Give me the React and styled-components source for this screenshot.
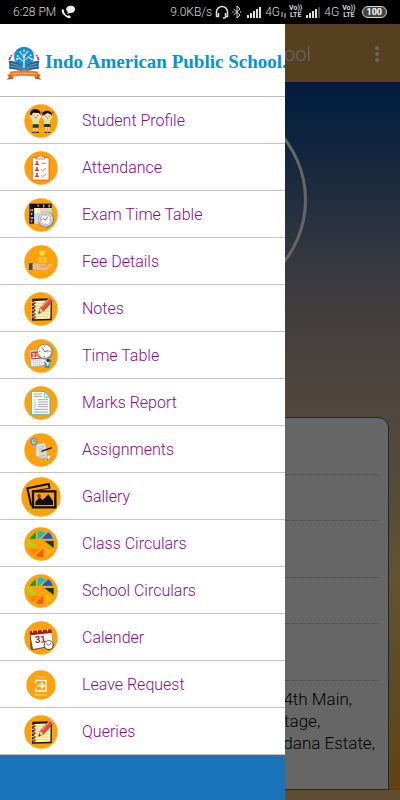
import React from 'react'
import styled, { createGlobalStyle } from 'styled-components'

const GlobalStyle = createGlobalStyle`
    * {
        box-sizing: border-box;
    }

    body {
        margin: 0;
        font-family: Roboto, 'Liberation Sans', sans-serif;
        font-weight: 300;
    }
`

const Screen = styled.div`
    position: relative;
    display: flex;
    flex-direction: column;
    min-height: 100vh;
    overflow: hidden;
    background: #000;
`

const StatusBar = styled.div`
    display: flex;
    align-items: center;
    justify-content: space-between;
    height: 24px;
    padding: 0 13px;
    background: #000;
    color: #d8d8d8;
    font-size: 12px;
    white-space: nowrap;

    svg {
        display: block;
        flex: none;
    }
`

const StatusGroup = styled.div`
    display: flex;
    align-items: center;
    gap: ${({ $gap }) => $gap}px;
`

const VolteBadge = styled.span`
    display: flex;
    flex-direction: column;
    align-items: center;
    font-size: 7px;
    font-weight: 700;
    line-height: 7px;
`

const Battery = styled.span`
    height: 12px;
    padding: 0 4px;
    margin-left: 3px;
    border: 1px solid #d8d8d8;
    border-radius: 6px;
    background: #444;
    color: #fff;
    font-size: 9px;
    font-weight: 700;
    line-height: 10px;
`

const Page = styled.div`
    position: relative;
    flex: 1;
    display: flex;
    flex-direction: column;
`

const AppBar = styled.header`
    display: flex;
    align-items: center;
    justify-content: flex-end;
    gap: 59px;
    height: 58px;
    padding: 2px 16px 0 0;
    background: #d7a04f;
    color: #fff;
`

const Title = styled.h1`
    margin: 0;
    font-size: 20px;
    font-weight: 300;
    white-space: nowrap;
`

const MenuButton = styled.button`
    padding: 0;
    border: none;
    background: none;
    color: inherit;

    svg {
        display: block;
    }
`

const Profile = styled.main`
    flex: 1;
    display: flex;
    flex-direction: column;
    align-items: center;
    padding: 14px 11px 0;
    border-bottom: 10px solid #eebf7d;
    background: linear-gradient(
        #084a98 0%,
        #0a509e 3%,
        #46699b 14%,
        #7d87a0 23%,
        #a59b9b 33%,
        #c3af9b 44%,
        #d7b98c 58%,
        #f5d273 70%,
        #ebb955 86%,
        #faa523 100%
    );
`

const Avatar = styled.div`
    width: 214px;
    height: 208px;
    border: 3px solid #fff;
    border-radius: 50%;
`

const Card = styled.section`
    flex: 1;
    width: 100%;
    margin-top: 113px;
    padding: 0 8px 34px;
    border: 1px solid #1a72b8;
    border-radius: 11px 11px 0 0;
    background: #fff;
`

const CardRow = styled.div`
    height: ${({ $tall }) => ($tall ? 57 : 46)}px;
    background: repeating-linear-gradient(90deg, #ccc 0 6px, #fff 6px 8px) bottom / 100% 1px no-repeat;
`

const Address = styled.address`
    display: flex;
    flex-direction: column;
    padding: 7px 0 0 calc(100% - 106px);
    color: #000;
    font-size: 17px;
    font-style: normal;
    line-height: 22px;
    white-space: nowrap;
`

const Scrim = styled.div`
    position: absolute;
    inset: 0;
    background: rgba(0, 0, 0, 0.6);
`

const Drawer = styled.aside`
    position: absolute;
    top: 0;
    bottom: 0;
    left: 0;
    width: calc(100% - 115px);
    overflow: hidden;
    background: #1a72b8;
`

const Brand = styled.div`
    display: flex;
    align-items: center;
    gap: 3px;
    height: 73px;
    padding: 4px 0 0 6px;
    border-bottom: 1px solid #bbb;
    background: #fff;
    color: #0094dc;
    font-family: 'Liberation Serif', serif;
    font-size: 19px;
    font-weight: 700;
    white-space: nowrap;

    svg {
        flex: none;
    }
`

const MenuList = styled.ul`
    margin: 0;
    padding: 0;
    list-style: none;
`

const MenuLink = styled.a`
    display: flex;
    align-items: center;
    height: 47px;
    padding-top: 1px;
    border-bottom: 1px solid #c4c4c4;
    background: #fff;
    color: #8b0a8b;
    font-size: 16px;
    text-decoration: none;
`

const IconCell = styled.span`
    display: flex;
    justify-content: center;
    width: 82px;
`

const Disc = ({ size = 34, box = 102, children }) => (
    <svg width={size} height={size} viewBox={`0 0 ${box} ${box}`} aria-hidden="true">
        <circle cx={box / 2} cy={box / 2} r={box / 2 - 1} fill="#ffa20a" />
        {children}
    </svg>
)

const StudentsIcon = () => (
    <Disc>
        <path d="M27 64h15v20h-5V70h-4v14h-6zM63 64h14v20h-5V70h-3v14h-5z" fill="#f6c9a0" />
        <path d="M19 42l-3-8 5-3 9 13h12l7-10 4 3-9 15v14H26V52zM57 44l-6-9 4-3 9 11h12l7-9 4 3-9 14v12H62V52z" fill="#f6d3ae" />
        <path d="M26 46h18v17H26zM61 46h17v17H61z" fill="#c9ec9a" />
        <path d="M26 61h18v10H26zM60 60h19l1 9H59z" fill="#1d3b22" />
        <path d="M26 83h8v4h-9zM36 83h8l1 4h-9zM63 83h7v4h-8zM72 83h6l1 4h-7z" fill="#222" />
        <circle cx="35" cy="33" r="15" fill="#fcdcb8" />
        <circle cx="70" cy="35" r="14" fill="#fcdcb8" />
        <path d="M19 33c-2-12 6-18 16-17 11 0 17 8 14 17l-4-6-18-1-4 8zM55 36c-1-13 6-16 15-16 10 0 15 7 14 16-3-6-9-7-14-9-4 4-9 5-15 9z" fill="#0d0d0d" />
        <path d="M57 26l-6-5 1 9zM82 25l6-4v9z" fill="#c22" />
        <path d="M28 35h3M39 35h3M64 37h3M74 37h3M33 41h5M69 43h4" stroke="#5b2b18" strokeWidth="2" />
    </Disc>
)

const AttendanceIcon = () => (
    <Disc>
        <rect x="25" y="20" width="50" height="67" rx="3" fill="#fff" stroke="#e33b25" strokeWidth="2" />
        <path d="M37 24v-7h7c1-5 10-5 11 0h7v7z" fill="#fff" stroke="#e33b25" strokeWidth="2" />
        {[36, 54, 72].map((y) => (
            <g key={y} fill="#e0301e">
                <circle cx="39" cy={y - 3} r="3" />
                <path d={`M33 ${y + 6}q0-6 6-6t6 6z`} />
            </g>
        ))}
        <path d="M52 37h14M52 55l4 4 10-8M52 73l4 4 10-8" fill="none" stroke="#e0301e" strokeWidth="2" />
    </Disc>
)

const ExamIcon = () => (
    <Disc>
        <rect x="16" y="17" width="67" height="60" fill="#111" />
        <rect x="31" y="30" width="52" height="47" fill="#f4eedb" />
        <path d="M31 30h17v15H31z" fill="#fff4bf" />
        <path d="M48 30h17v15H48z" fill="#f8c8c2" />
        <path d="M65 30h18v15H65z" fill="#c9e6b5" />
        <path d="M31 45h17v16H31z" fill="#c8dcf1" />
        <path d="M31 61h17v16H31z" fill="#ead2ec" />
        <path d="M40 21h3v6M57 21h4l-4 6h4M73 21h4v6h-4M77 24h-3M20 40v-6l3 3 3-3v6M20 46h6M23 46v6M20 57l2 5 2-4 2 4 1-5M20 68h6M23 68v6" fill="none" stroke="#fff" strokeWidth="2" />
        <circle cx="66" cy="65" r="24" fill="#777" />
        <circle cx="65" cy="64" r="22" fill="#d6d9dc" />
        <circle cx="65" cy="65" r="16" fill="#f8fafc" stroke="#999" strokeWidth="2" />
        <path d="M65 66l-9-5M65 66l6-10" stroke="#e0512b" strokeWidth="3" />
        <path d="M65 51v3M65 76v3M51 65h3M76 65h3" stroke="#555" strokeWidth="2" />
    </Disc>
)

const FeeIcon = () => (
    <Disc>
        <path d="M15 54h11v21H15z" fill="#2d5068" />
        <path d="M26 56c8-3 15-2 22 2h13c5 0 5 6 0 6H49l17 1 14-9c4-2 7 1 4 4L68 74c-4 3-9 3-14 2l-28-3z" fill="#e8b98a" />
        <path d="M49 65h15" stroke="#c9935f" strokeWidth="2" />
        <circle cx="54" cy="24" r="9" fill="#ffd43c" stroke="#efb419" strokeWidth="2" />
        <path d="M54 19v10M51 21h5M51 27h5" stroke="#fff0a0" strokeWidth="2" />
        {[36, 42, 48].map((y) => (
            <g key={y} fill="#ffd43c" stroke="#eba912">
                <rect x="42" y={y} width="13" height="5" rx="2" />
                <rect x="56" y={y} width="13" height="5" rx="2" />
            </g>
        ))}
    </Disc>
)

const NotesIcon = () => (
    <Disc>
        <path d="M25 20l59-1-1 66-59 1z" fill="#1c1608" />
        <path d="M30 27l50-2-1 55-50 2z" fill="#fdf3b4" />
        <path d="M37 34h38M37 42h38M37 50h38M37 58h37M37 66h37M37 74h36" stroke="#cfc79a" strokeWidth="2" />
        {[33, 44, 55, 66, 76].map((y) => (
            <g key={y}>
                <circle cx="31" cy={y} r="4" fill="#8e1d15" />
                <path d={`M21 ${y - 1}h10`} stroke="#e8dfb2" strokeWidth="3" />
            </g>
        ))}
        <path d="M44 64l5-16 26-30 11 8-27 31z" fill="#ee4d31" stroke="#8e2a15" strokeWidth="2" />
        <path d="M44 64l5-16 10 9z" fill="#f8c58d" />
        <path d="M44 64l2-6 4 3z" fill="#222" />
        <path d="M53 46l23-27" stroke="#ff9273" strokeWidth="4" />
        <path d="M75 18l4-3 10 7-3 4z" fill="#e99" />
    </Disc>
)

const TimeTableIcon = () => (
    <Disc>
        <path d="M16 34l49-4 5 48-49 6z" fill="#e9f1f8" stroke="#8c9db0" strokeWidth="2" />
        <path d="M20 38l29-2 3 23-30 2z" fill="#d8432e" />
        <text x="23" y="56" fill="#fff" fontSize="21" fontWeight="700" fontFamily="Liberation Sans, sans-serif">12</text>
        <path d="M25 66l30-3M26 71l30-3M27 77l30-4" stroke="#9fb8d0" strokeWidth="2" strokeDasharray="4 2" />
        <circle cx="63" cy="38" r="24" fill="#858d94" />
        <circle cx="62" cy="37" r="20" fill="#f7f7f3" />
        <path d="M62 38l-8-12M62 38l12-3M62 20v4M62 51v4M45 37h4M76 37h4" stroke="#333" strokeWidth="2" />
        <path d="M59 66l8 5 11-10 6 3-7 11v12H62V75z" fill="#2f95ce" />
        <path d="M65 70l6 12 6-12z" fill="#f8fcff" />
        <circle cx="72" cy="64" r="5" fill="#51301c" />
    </Disc>
)

const MarksIcon = () => (
    <Disc>
        <path d="M22 16h39l17 18v52H22z" fill="#fff" stroke="#36c3a7" strokeWidth="3" />
        <path d="M61 16v18h17z" fill="#bff2e5" stroke="#36c3a7" strokeWidth="2" />
        <path d="M29 24h25M29 31h25M42 41h30M42 48h30M42 55h30M42 62h30M29 70h43M29 78h43" stroke="#777" strokeWidth="2" />
        <path d="M29 42l2 2 6-5M29 50l2 2 6-5M29 57l2 2 6-5M29 64l2 2 6-5" fill="none" stroke="#36c3a7" strokeWidth="2" />
    </Disc>
)

const AssignmentsIcon = () => (
    <Disc>
        <path d="M36 34l28-4 5 24 1 20-22 3-14-8z" fill="#d6d3c6" stroke="#aaa79a" strokeWidth="2" />
        <path d="M39 34l23-3 5 30-28 9z" fill="#e3e1da" />
        <path d="M42 42l18-4M43 48l18-4M44 54l17-4M45 61l17-4M44 70l17-3" stroke="#aab0b4" strokeWidth="2" />
        <circle cx="30" cy="26" r="11" fill="#7e8e9b" />
        <circle cx="30" cy="26" r="7" fill="#c6d2da" />
        <path d="M30 21v5h5" fill="none" stroke="#444" strokeWidth="2" />
        <path d="M52 55l32-11" stroke="#111" strokeWidth="4" />
        <path d="M64 80l10-13 5 4-9 14z" fill="#dff1ee" />
        <path d="M66 79l3-4 5 4-4 5z" fill="#2aa79a" />
    </Disc>
)

const GalleryIcon = () => (
    <Disc size={40} box={120}>
        <path d="M30 84L19 34l64-13 3 14" fill="none" stroke="#111" strokeWidth="6" />
        <path d="M31 88l-6-23M35 42l49-8" stroke="#111" strokeWidth="3" />
        <rect x="36" y="43" width="67" height="48" fill="#ffa20a" stroke="#111" strokeWidth="7" />
        <path d="M43 84V74l13-13 9 8 17-17 14 20v12z" fill="#111" />
        <circle cx="54" cy="57" r="5" fill="#111" />
        <circle cx="54" cy="57" r="2" fill="#ffa20a" />
    </Disc>
)

const CircularsIcon = () => (
    <Disc>
        <path d="M16 35l19-21v22z" fill="#0b9f12" />
        <path d="M41 12h12l13 5-25 21z" fill="#10bcd8" />
        <path d="M53 35l20-19 7 6 7 13z" fill="#0d5ad8" />
        <path d="M61 42h28v21z" fill="#07470f" />
        <path d="M65 61l22 8-7 10-15 9z" fill="#ffb70a" />
        <path d="M58 64v26H46l-11-3z" fill="#f35b0a" />
        <path d="M14 66h33L27 85z" fill="#ff8700" />
        <path d="M12 37l26 23H11z" fill="#afd80a" />
        <circle cx="51" cy="49" r="12" fill="#ffa20a" />
    </Disc>
)

const CalendarIcon = () => (
    <Disc>
        <path d="M17 36l65-6 7 45-62 13-7-3z" fill="#605246" />
        <path d="M18 34l64-6 5 45-60 11z" fill="#fff" />
        <path d="M17 31l65-6 2 11-65 7z" fill="#a81a19" />
        <path d="M26 27v8M40 26v8M55 24v8M70 23v8" stroke="#eee" strokeWidth="3" />
        <text x="34" y="67" fill="#b02722" fontSize="30" fontWeight="700" fontFamily="Liberation Sans, sans-serif" transform="rotate(-7 34 67)">31</text>
        <circle cx="74" cy="73" r="15" fill="#4b4b4b" />
        <circle cx="74" cy="72" r="12" fill="#f8f8f8" />
        <path d="M66 67l8 6 7-7" fill="none" stroke="#444" strokeWidth="2" />
    </Disc>
)

const LeaveIcon = () => (
    <Disc size={30} box={90}>
        <path d="M29 42V31h31v32H29V53" fill="none" stroke="#fff" strokeWidth="4" />
        <path d="M33 47h20M45 38l9 9-9 9" fill="none" stroke="#fff" strokeWidth="5" />
        <g fill="#ffe2b0" fontSize="10" textAnchor="middle" fontFamily="Liberation Sans, sans-serif">
            <text x="45" y="23">Leave</text>
            <text x="44" y="77">Request</text>
        </g>
    </Disc>
)

const Logo = () => (
    <svg width="36" height="40" viewBox="0 0 108 120" aria-hidden="true">
        <path d="M19 42a37 37 0 0 1 70 0" fill="none" stroke="#ef8150" strokeWidth="3" strokeDasharray="4 2" />
        <path d="M13 66c-5-12-2-21 4-26M95 66c5-12 2-21-4-26" fill="none" stroke="#8d2d8b" strokeWidth="5" strokeDasharray="10 2" />
        <circle cx="54" cy="44" r="30" fill="#168fd3" />
        <path d="M54 80V35M54 60L38 46M54 56l16-13M54 47l-9-13M54 46l8-15M41 49l-8 1M67 46l9 4" fill="none" stroke="#fff" strokeWidth="3" />
        <g fill="#d8f1ff">
            <circle cx="54" cy="26" r="3" />
            <circle cx="43" cy="31" r="3" />
            <circle cx="65" cy="29" r="3" />
            <circle cx="35" cy="42" r="3" />
            <circle cx="74" cy="40" r="3" />
            <circle cx="33" cy="52" r="3" />
            <circle cx="77" cy="52" r="3" />
        </g>
        <path d="M10 56c17 0 33 9 44 22 11-13 27-22 44-22v25c-18 0-34 4-44 12-10-8-26-12-44-12z" fill="#20638e" />
        <path d="M14 65c17 1 31 8 40 18 9-10 23-17 40-18M14 73c17 1 30 6 40 15 10-9 23-14 40-15" fill="none" stroke="#9fc9dc" strokeWidth="2" />
        <path d="M3 98l18-3v15L2 113l7-8zM105 98l-18-3v15l19 3-7-8z" fill="#c85a13" />
        <path d="M10 89q44-7 88 0l-5 16q-39-7-78 0z" fill="#ee7e27" />
        <path d="M20 96q34-5 68 0" fill="none" stroke="#ffd5a7" strokeWidth="3" strokeDasharray="5 2" />
    </svg>
)

const CallIcon = () => (
    <svg width="14" height="14" viewBox="0 0 14 14" fill="#eee" aria-hidden="true">
        <path d="M1 4l2 1v2c1 2 2 3 4 4l1-1 2 2c-1 2-4 1-6-1C1 9 0 6 1 4z" />
        <path d="M8 1c3-1 6 0 6 3s-2 4-5 4l-3 1 1-2C4 5 5 2 8 1z" />
    </svg>
)

const HeadsetIcon = () => (
    <svg width="14" height="14" viewBox="0 0 28 28" fill="none" stroke="#ddd" strokeWidth="3" aria-hidden="true">
        <path d="M7 23H3v-9a11 11 0 0 1 22 0v9h-4M7 24v-8M21 24v-8M22 24l-3 2h-3" />
    </svg>
)

const BluetoothIcon = () => (
    <svg width="10" height="14" viewBox="0 0 20 28" fill="none" stroke="#ddd" strokeWidth="2" aria-hidden="true">
        <path d="M3 8l13 12-6 6V2l6 6L3 20M0 14h3M16 14h3" />
    </svg>
)

const SignalIcon = ({ bars }) => (
    <svg width="16" height="12" viewBox="0 0 16 12" aria-hidden="true">
        {[0, 1, 2, 3, 4].map((i) => (
            <rect key={i} x={i * 3 + 1} y={9 - i * 2} width="2" height={3 + i * 2} fill={i < bars ? '#ddd' : '#444'} />
        ))}
    </svg>
)

const DataIcon = () => (
    <svg width="5" height="12" viewBox="0 0 5 12" stroke="#ddd" aria-hidden="true">
        <path d="M1 6v5M4 7v5" />
    </svg>
)

const Volte = () => (
    <VolteBadge>
        <span>Vo))</span>
        <span>LTE</span>
    </VolteBadge>
)

const menu = [
    { label: 'Student Profile', Icon: StudentsIcon },
    { label: 'Attendance', Icon: AttendanceIcon },
    { label: 'Exam Time Table', Icon: ExamIcon },
    { label: 'Fee Details', Icon: FeeIcon },
    { label: 'Notes', Icon: NotesIcon },
    { label: 'Time Table', Icon: TimeTableIcon },
    { label: 'Marks Report', Icon: MarksIcon },
    { label: 'Assignments', Icon: AssignmentsIcon },
    { label: 'Gallery', Icon: GalleryIcon },
    { label: 'Class Circulars', Icon: CircularsIcon },
    { label: 'School Circulars', Icon: CircularsIcon },
    { label: 'Calender', Icon: CalendarIcon },
    { label: 'Leave Request', Icon: LeaveIcon },
    { label: 'Queries', Icon: NotesIcon },
]

const App = () => (
    <>
        <GlobalStyle />
        <Screen>
            <StatusBar>
                <StatusGroup $gap={5}>
                    <span>6:28 PM</span>
                    <CallIcon />
                </StatusGroup>
                <StatusGroup $gap={3}>
                    <span>9.0KB/s</span>
                    <HeadsetIcon />
                    <StatusGroup $gap={4}>
                        <BluetoothIcon />
                        <SignalIcon bars={5} />
                    </StatusGroup>
                    <StatusGroup $gap={1}>
                        <span>4G</span>
                        <DataIcon />
                    </StatusGroup>
                    <Volte />
                    <SignalIcon bars={4} />
                    <span>4G</span>
                    <Volte />
                    <Battery>100</Battery>
                </StatusGroup>
            </StatusBar>
            <Page>
                <AppBar>
                    <Title>Indo American Public School</Title>
                    <MenuButton aria-label="More options">
                        <svg width="14" height="18" viewBox="0 0 14 18" fill="currentColor">
                            <circle cx="7" cy="3" r="2" />
                            <circle cx="7" cy="9" r="2" />
                            <circle cx="7" cy="15" r="2" />
                        </svg>
                    </MenuButton>
                </AppBar>
                <Profile>
                    <Avatar />
                    <Card>
                        <CardRow $tall />
                        <CardRow />
                        <CardRow $tall />
                        <CardRow />
                        <CardRow $tall />
                        <Address>
                            <span>14th Main,</span>
                            <span>Stage,</span>
                            <span>ndana Estate,</span>
                        </Address>
                    </Card>
                </Profile>
                <Scrim />
                <Drawer>
                    <Brand>
                        <Logo />
                        <span>Indo American Public School.</span>
                    </Brand>
                    <nav>
                        <MenuList>
                            {menu.map(({ label, Icon }) => (
                                <li key={label}>
                                    <MenuLink href="#">
                                        <IconCell>
                                            <Icon />
                                        </IconCell>
                                        {label}
                                    </MenuLink>
                                </li>
                            ))}
                        </MenuList>
                    </nav>
                </Drawer>
            </Page>
        </Screen>
    </>
)

export default App
